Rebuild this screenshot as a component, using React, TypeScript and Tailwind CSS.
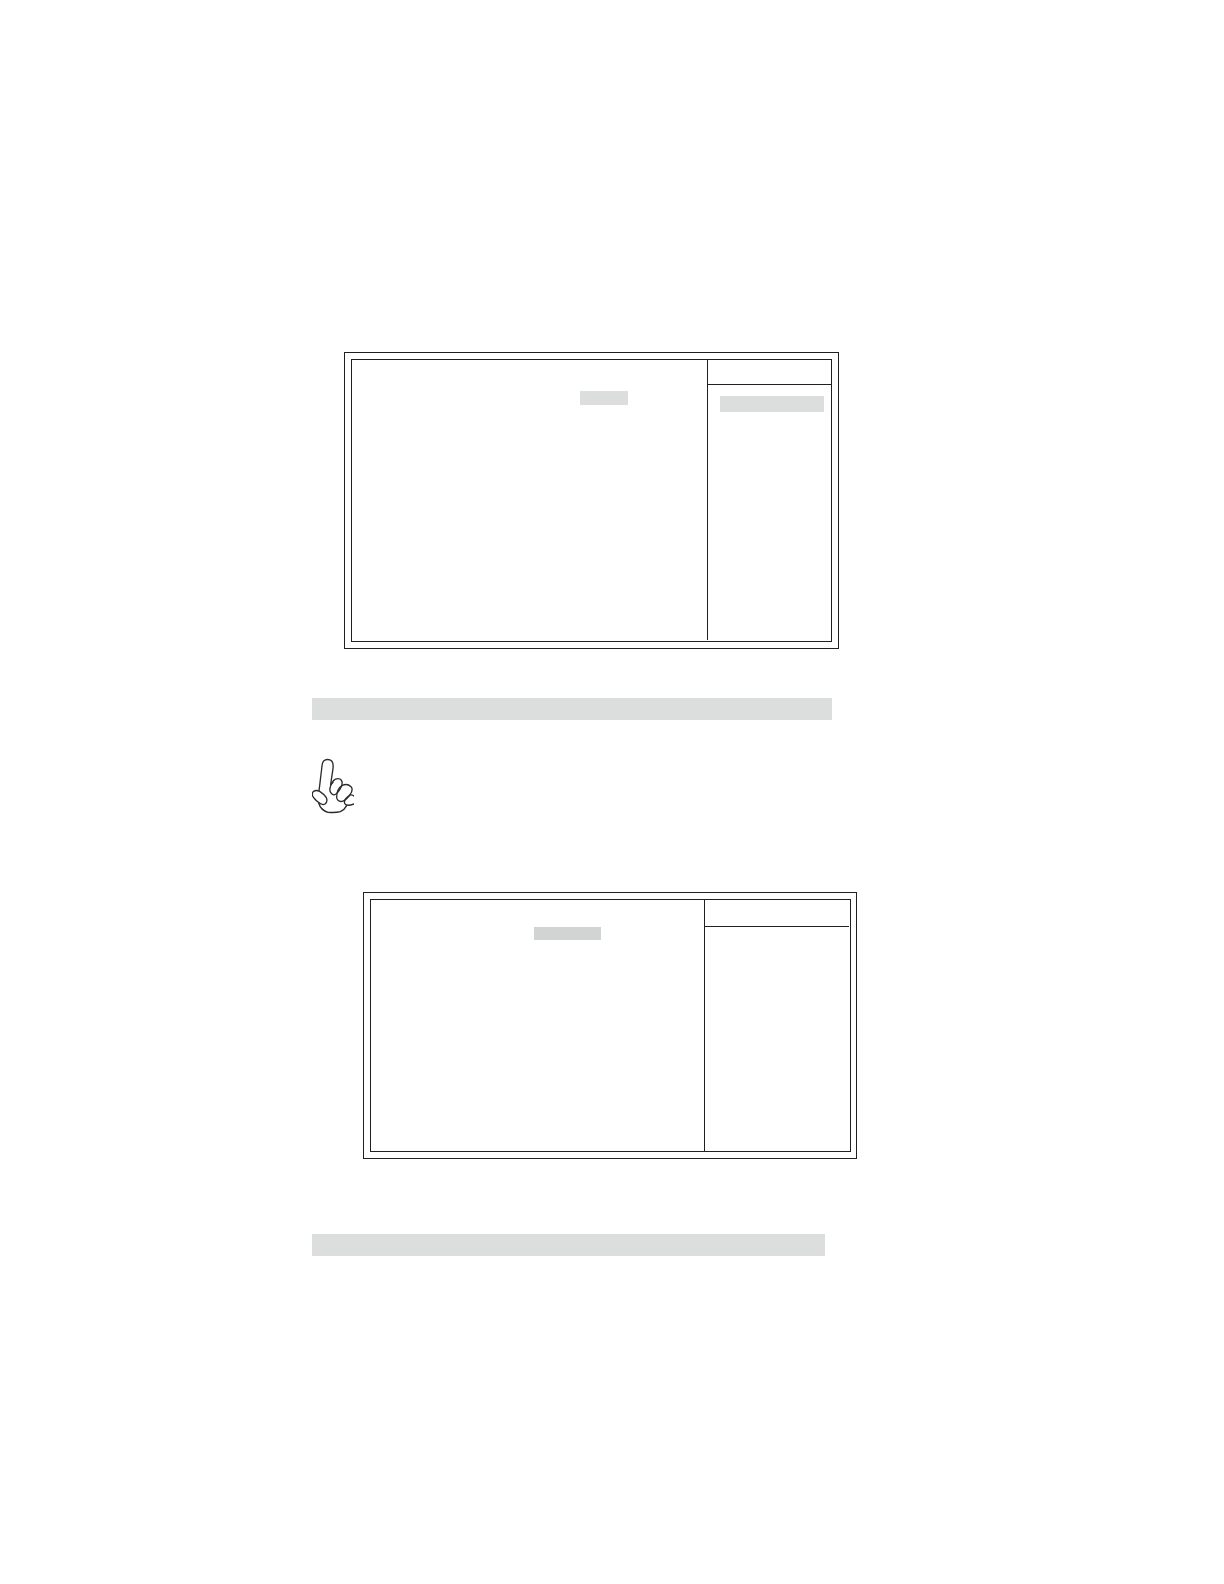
import type { ReactNode } from 'react';

/**
 * Double-ruled setup screen frame: main area on the left, help column on the right.
 */
function SetupFrame({
  className,
  children,
}: {
  className: string;
  children: ReactNode;
}) {
  return (
    <section className={`border border-[#231f20] ${className}`}>
      <div className="flex w-full border border-[#231f20]">{children}</div>
    </section>
  );
}

function PointingHand() {
  return (
    <svg
      className="h-14 w-[42px]"
      viewBox="36 24 126 168"
      fill="none"
      stroke="#2b2b2b"
      strokeWidth="4"
      strokeLinecap="round"
      strokeLinejoin="round"
      aria-hidden="true"
    >
      {/* index finger */}
      <path d="M57 122C60 101 62 79 65 57C66 45 66 38 71 33C77 27 89 27 95 33C100 39 100 47 99 56C97 71 94 86 92 104L99 97" />
      {/* folded fingers */}
      <path d="M96 132C90 127 88 119 91 110C95 97 104 86 114 86C123 86 128 93 126 103C123 115 116 125 108 132C104 135 99 135 96 132Z" />
      <path d="M127 106C136 102 147 104 153 110C159 117 156 126 150 134C144 143 135 152 126 154C117 156 110 150 110 142C110 127 117 112 127 106Z" />
      <path d="M150 135C155 134 159 136 162 138M148 137C139 143 131 152 134 160C138 168 151 166 162 162" />
      {/* thumb */}
      <path d="M41 124C47 120 53 121 59 124C67 129 75 136 79 143C82 150 80 158 75 162C69 166 61 162 55 157C48 151 41 145 38 138C36 132 37 127 41 124Z" />
      {/* palm */}
      <path d="M56 159C60 173 70 183 84 187C98 188 111 188 121 185C130 181 136 175 140 167" />
    </svg>
  );
}

export default function App() {
  return (
    <main className="min-h-screen bg-white pt-[352px] pb-80">
      <div className="mx-auto flex max-w-[600px] flex-col">
        <SetupFrame className="mr-[73px] ml-8 p-1.5">
          <div className="flex min-h-[281px] flex-1 justify-end pt-[31px] pr-[79px]">
            <div className="h-3.5 w-12 bg-[#dcdddd]" />
          </div>
          <aside className="mb-px w-[124px] border-l border-[#231f20]">
            <div className="h-[25px] border-b border-[#231f20]" />
            <div className="mt-[11px] mr-[7px] ml-3 h-4 bg-[#dcdddd]" />
          </aside>
        </SetupFrame>

        <div className="mt-[49px] mr-20 h-[22px] bg-[#dcdddd]" />

        <div className="mt-[38px]">
          <PointingHand />
        </div>

        <SetupFrame className="mt-[78px] mr-[55px] ml-[51px] py-1.5 pr-[5px] pl-1.5">
          <div className="flex min-h-[251px] flex-1 justify-end pt-[27px] pr-[103px]">
            <div className="h-[13px] w-[67px] bg-[#d2d3d3]" />
          </div>
          <aside className="w-[146px] border-l border-[#231f20]">
            <div className="mr-px h-[27px] border-b border-[#231f20]" />
          </aside>
        </SetupFrame>

        <div className="mt-[75px] mr-[87px] h-[22px] bg-[#dcdddd]" />
      </div>
    </main>
  );
}
